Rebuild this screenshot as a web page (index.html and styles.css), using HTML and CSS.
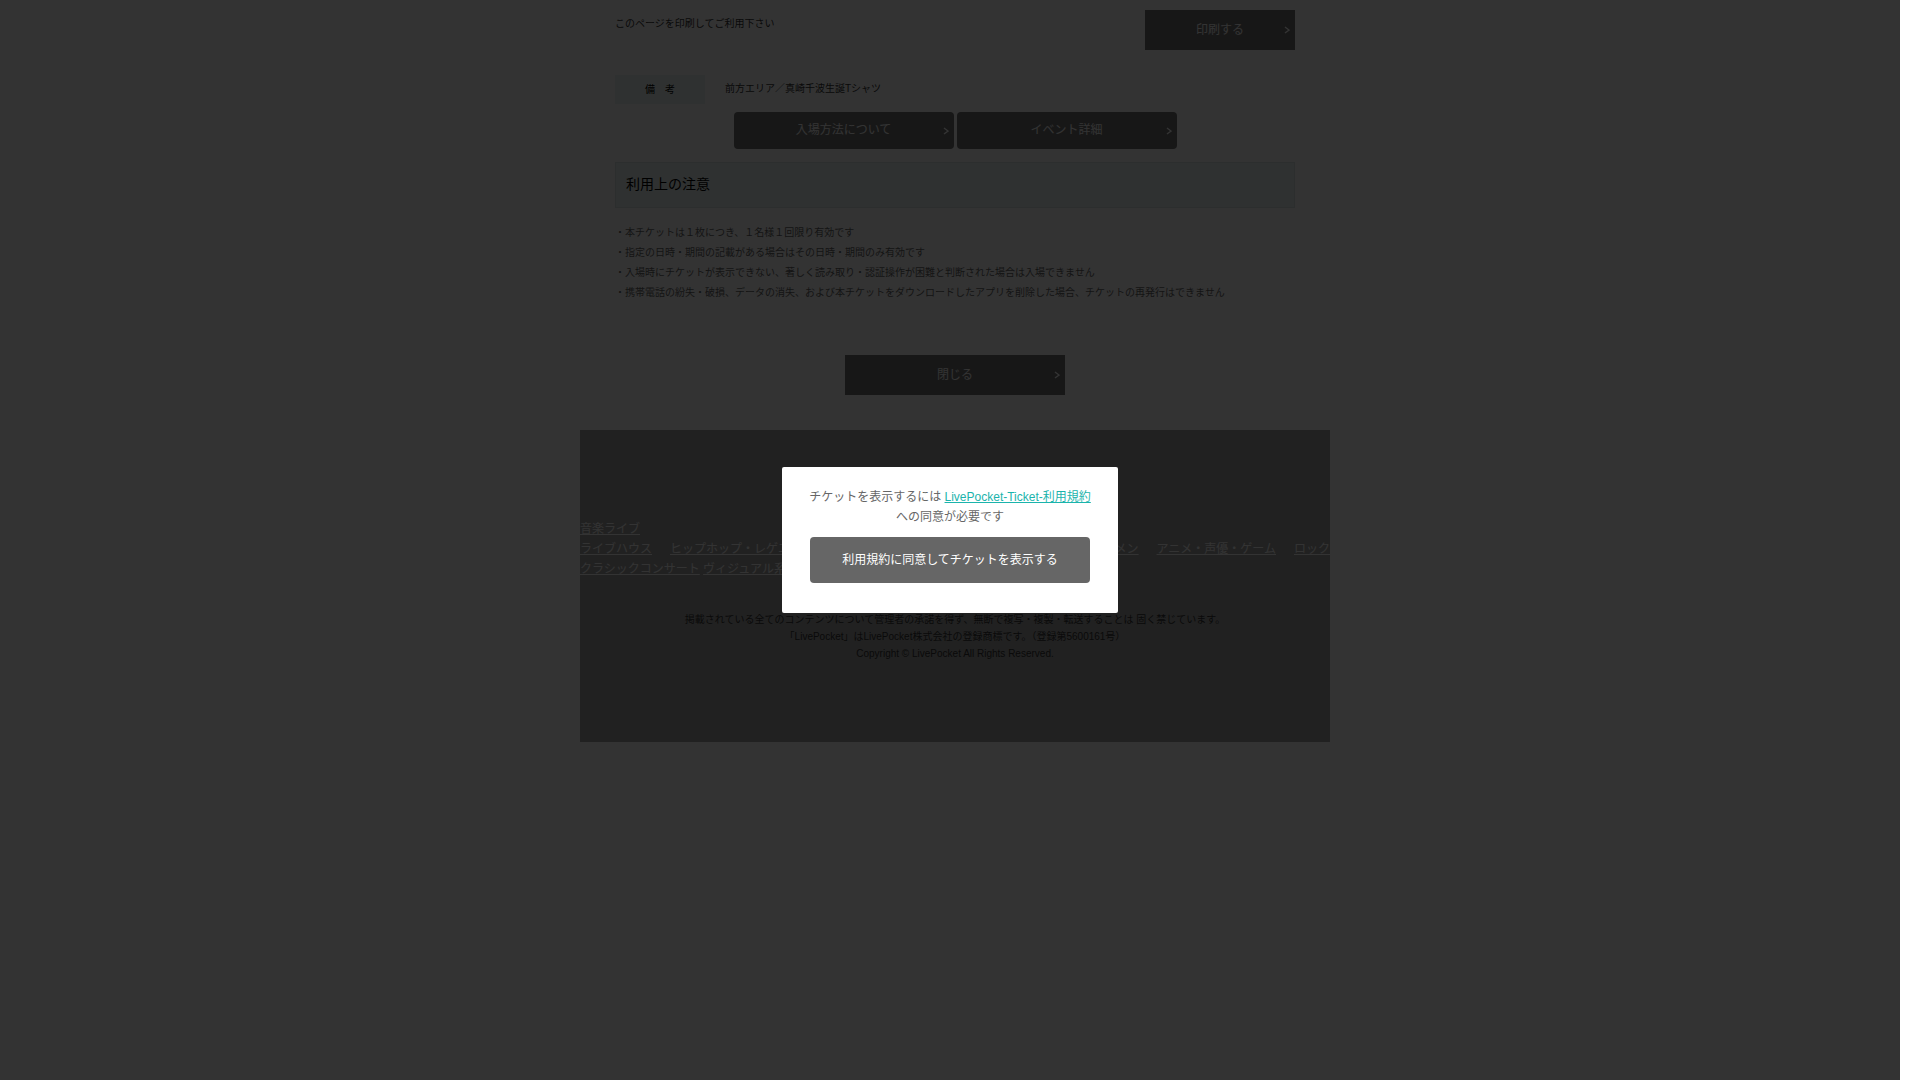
FILE: index.html
```
<!DOCTYPE html>
<html lang="ja">
<head>
    <meta charset="utf-8">
    <title>LivePocket-Ticket-</title>
    <link rel="stylesheet" href="styles.css">
</head>
<body>

<div class="container">
  <main class="ticket">
    <div class="print-row">
      <p>このページを印刷してご利用下さい</p>
      <button type="button" class="btn btn-print">印刷する
        <svg class="arrow" viewBox="0 0 6 8"><path d="M1 1l4 3-4 3"/></svg>
      </button>
    </div>

    <dl class="remarks">
      <dt>備　考</dt>
      <dd>前方エリア／真崎千波生誕Tシャツ</dd>
    </dl>

    <div class="btn-row">
      <button type="button" class="btn btn-round">入場方法について
        <svg class="arrow" viewBox="0 0 6 8"><path d="M1 1l4 3-4 3"/></svg>
      </button>
      <button type="button" class="btn btn-round">イベント詳細
        <svg class="arrow" viewBox="0 0 6 8"><path d="M1 1l4 3-4 3"/></svg>
      </button>
    </div>

    <h2>利用上の注意</h2>
    <ul class="notes">
      <li>・本チケットは１枚につき、１名様１回限り有効です</li>
      <li>・指定の日時・期間の記載がある場合はその日時・期間のみ有効です</li>
      <li>・入場時にチケットが表示できない、著しく読み取り・認証操作が困難と判断された場合は入場できません</li>
      <li>・携帯電話の紛失・破損、データの消失、および本チケットをダウンロードしたアプリを削除した場合、チケットの再発行はできません</li>
    </ul>

    <div class="btn-row">
      <button type="button" class="btn">閉じる
        <svg class="arrow" viewBox="0 0 6 8"><path d="M1 1l4 3-4 3"/></svg>
      </button>
    </div>
  </main>

  <footer>
    <nav>
      <div><a href="#">音楽ライブ</a></div>
      <div class="genres">
        <a href="#">ライブハウス</a>
        <a href="#">ヒップホップ・レゲエ</a>
        <a href="#" class="push">イケメン</a>
        <a href="#">アニメ・声優・ゲーム</a>
        <a href="#">ロック</a>
      </div>
      <div>
        <a href="#">クラシックコンサート</a>
        <a href="#">ヴィジュアル系</a>
      </div>
    </nav>
    <p class="copyright">
      掲載されている全てのコンテンツについて管理者の承諾を得ず、無断で複写・複製・転送することは 固く禁じています。<br>
      「LivePocket」はLivePocket株式会社の登録商標です。（登録第5600161号）<br>
      Copyright © LivePocket All Rights Reserved.
    </p>
  </footer>
</div>

<div class="overlay">
  <div class="modal" role="dialog" aria-modal="true">
    <p>チケットを表示するには <a href="#">LivePocket-Ticket-利用規約</a><br>への同意が必要です</p>
    <button type="button" class="btn-agree">利用規約に同意してチケットを表示する</button>
  </div>
</div>

</body>
</html>
```

FILE: styles.css
```
* {
  box-sizing: border-box;
}

body {
  margin: 0;
  padding-right: 10px;
  background-color: #fff;
  color: #666;
  font-family: "Liberation Sans", "Noto Sans CJK JP", sans-serif;
  font-size: 12px;
  line-height: 20px;
}

p, h2, ul, dl, dd {
  margin: 0;
  padding: 0;
}

button {
  font-family: inherit;
  font-size: 12px;
  line-height: 20px;
  color: #fff;
  border: none;
  cursor: pointer;
}

.container {
  max-width: 750px;
  margin: auto;
}

.ticket {
  padding: 10px 35px 35px;
  font-size: 10px;
}

.print-row {
  display: flex;
  justify-content: space-between;
  margin-bottom: 25px;
  color: #333;
}

.print-row p {
  line-height: 28px;
}

.btn {
  position: relative;
  width: 220px;
  padding: 10px;
  background-color: #737373;
}

.btn-print {
  width: 150px;
}

.btn-round {
  padding: 8px 10px 9px;
  border-radius: 4px;
}

.arrow {
  position: absolute;
  top: 50%;
  right: 5px;
  width: 6px;
  height: 8px;
  margin-top: -4px;
  fill: none;
  stroke: #fff;
  stroke-width: 1.4;
}

.remarks {
  display: flex;
  margin-bottom: 8px;
  color: #333;
}

.remarks dt {
  width: 90px;
  padding: 5px 0 4px;
  background-color: #ebf5f3;
  color: #000;
  text-align: center;
}

.remarks dd {
  padding: 4px 20px;
}

.btn-row {
  display: flex;
  justify-content: center;
  gap: 3px;
}

h2 {
  margin: 13px 0 15px;
  padding: 11px 10px 13px;
  border: 1px solid #dbe5e3;
  background-color: #ebf5f3;
  color: #000;
  font-size: 14px;
  font-weight: normal;
}

.notes {
  margin-bottom: 52px;
  list-style-type: none;
}

footer {
  padding: 89px 0 80px;
  background-color: #a5a5a5;
}

nav {
  margin-bottom: 32px;
}

nav a {
  color: #fff;
}

.genres {
  display: flex;
  gap: 18px;
  white-space: nowrap;
}

.genres .push {
  margin-left: auto;
}

.copyright {
  color: #333;
  font-size: 10px;
  line-height: 17px;
  text-align: center;
}

.overlay {
  position: fixed;
  top: 0;
  right: 20px;
  bottom: 0;
  left: 0;
  display: flex;
  align-items: center;
  justify-content: center;
  background-color: rgba(0, 0, 0, 0.8);
}

.modal {
  padding: 20px 27px 30px;
  border-radius: 2px;
  background-color: #fff;
  text-align: center;
}

.modal a {
  color: #1bb4ac;
}

.btn-agree {
  width: 280px;
  margin-top: 10px;
  padding: 13px 10px;
  border-radius: 4px;
  background-color: #666;
}
```
